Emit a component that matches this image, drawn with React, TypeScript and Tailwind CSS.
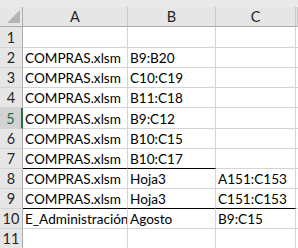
import React from 'react';

const rows: { a: string; b: string; c: string; line?: 'ab' | 'abc'; h: string }[] = [
  { a: '', b: '', c: '', h: 'h-[21px]' },
  { a: 'COMPRAS.xlsm', b: 'B9:B20', c: '', h: 'h-[20px]' },
  { a: 'COMPRAS.xlsm', b: 'C10:C19', c: '', h: 'h-[20px]' },
  { a: 'COMPRAS.xlsm', b: 'B11:C18', c: '', h: 'h-[20px]' },
  { a: 'COMPRAS.xlsm', b: 'B9:C12', c: '', h: 'h-[21px]' },
  { a: 'COMPRAS.xlsm', b: 'B10:C15', c: '', h: 'h-[20px]' },
  { a: 'COMPRAS.xlsm', b: 'B10:C17', c: '', line: 'ab', h: 'h-[20px]' },
  { a: 'COMPRAS.xlsm', b: 'Hoja3', c: 'A151:C153', h: 'h-[20px]' },
  { a: 'COMPRAS.xlsm', b: 'Hoja3', c: 'C151:C153', line: 'abc', h: 'h-[20px]' },
  { a: 'E_Administración', b: 'Agosto', c: 'B9:C15', h: 'h-[20px]' },
  { a: '', b: '', c: '', h: 'h-[20px]' },
];

const cols = 'grid grid-cols-[23px_105px_88px_80px_1fr]';
const cell = 'flex items-end overflow-hidden whitespace-nowrap pl-[2px] pb-[1px] leading-[16px] text-[13.6px] text-black border-r border-b';

export default function App() {
  return (
    <div className="w-[298px] h-[248px] overflow-hidden bg-white font-['Lato','Liberation_Sans',sans-serif]">
      <div className="h-[7px] bg-[#e9e9e9]" />
      {/* column headers */}
      <div className={`${cols} h-[20px] bg-[#e6e6e6] text-[14.5px] text-[#262626]`}>
        <div className="relative border-r border-b border-[#ababab]">
          <svg className="absolute left-[7px] top-[3px]" width="13" height="13" viewBox="0 0 13 13">
            <polygon points="13,0 13,13 0,13" fill="#b4b4b4" />
          </svg>
        </div>
        {['A', 'B', 'C', ''].map((l, i) => (
          <div
            key={i}
            className="flex items-center justify-center border-r border-b border-r-[#c8c8c8] border-b-[#ababab] leading-none pt-[1px]"
          >
            {l}
          </div>
        ))}
      </div>
      {rows.map((r, i) => {
        const n = i + 1;
        const active = n === 5;
        const black = (col: 'a' | 'b' | 'c') =>
          r.line && r.line.includes(col) ? 'border-b-black' : 'border-b-[#d4d4d4]';
        return (
          <div key={n} className={`${cols} ${r.h}`}>
            <div
              className={`flex items-end justify-center pb-[1px] leading-[16px] text-[14.5px] border-b border-b-[#d4d4d4] ${
                active
                  ? 'bg-[#d2d2d2] text-[#217346] border-r-2 border-r-[#217346]'
                  : 'bg-[#e6e6e6] text-[#262626] border-r border-r-[#ababab]'
              }`}
            >
              {n}
            </div>
            <div className={`${cell} border-r-[#d4d4d4] ${black('a')}`}>{r.a}</div>
            <div className={`${cell} border-r-[#d4d4d4] ${black('b')}`}>{r.b}</div>
            <div className={`${cell} border-r-[#d4d4d4] ${black('c')}`}>{r.c}</div>
            <div className={`${cell} border-r-[#d4d4d4] border-b-[#d4d4d4]`} />
          </div>
        );
      })}
    </div>
  );
}
